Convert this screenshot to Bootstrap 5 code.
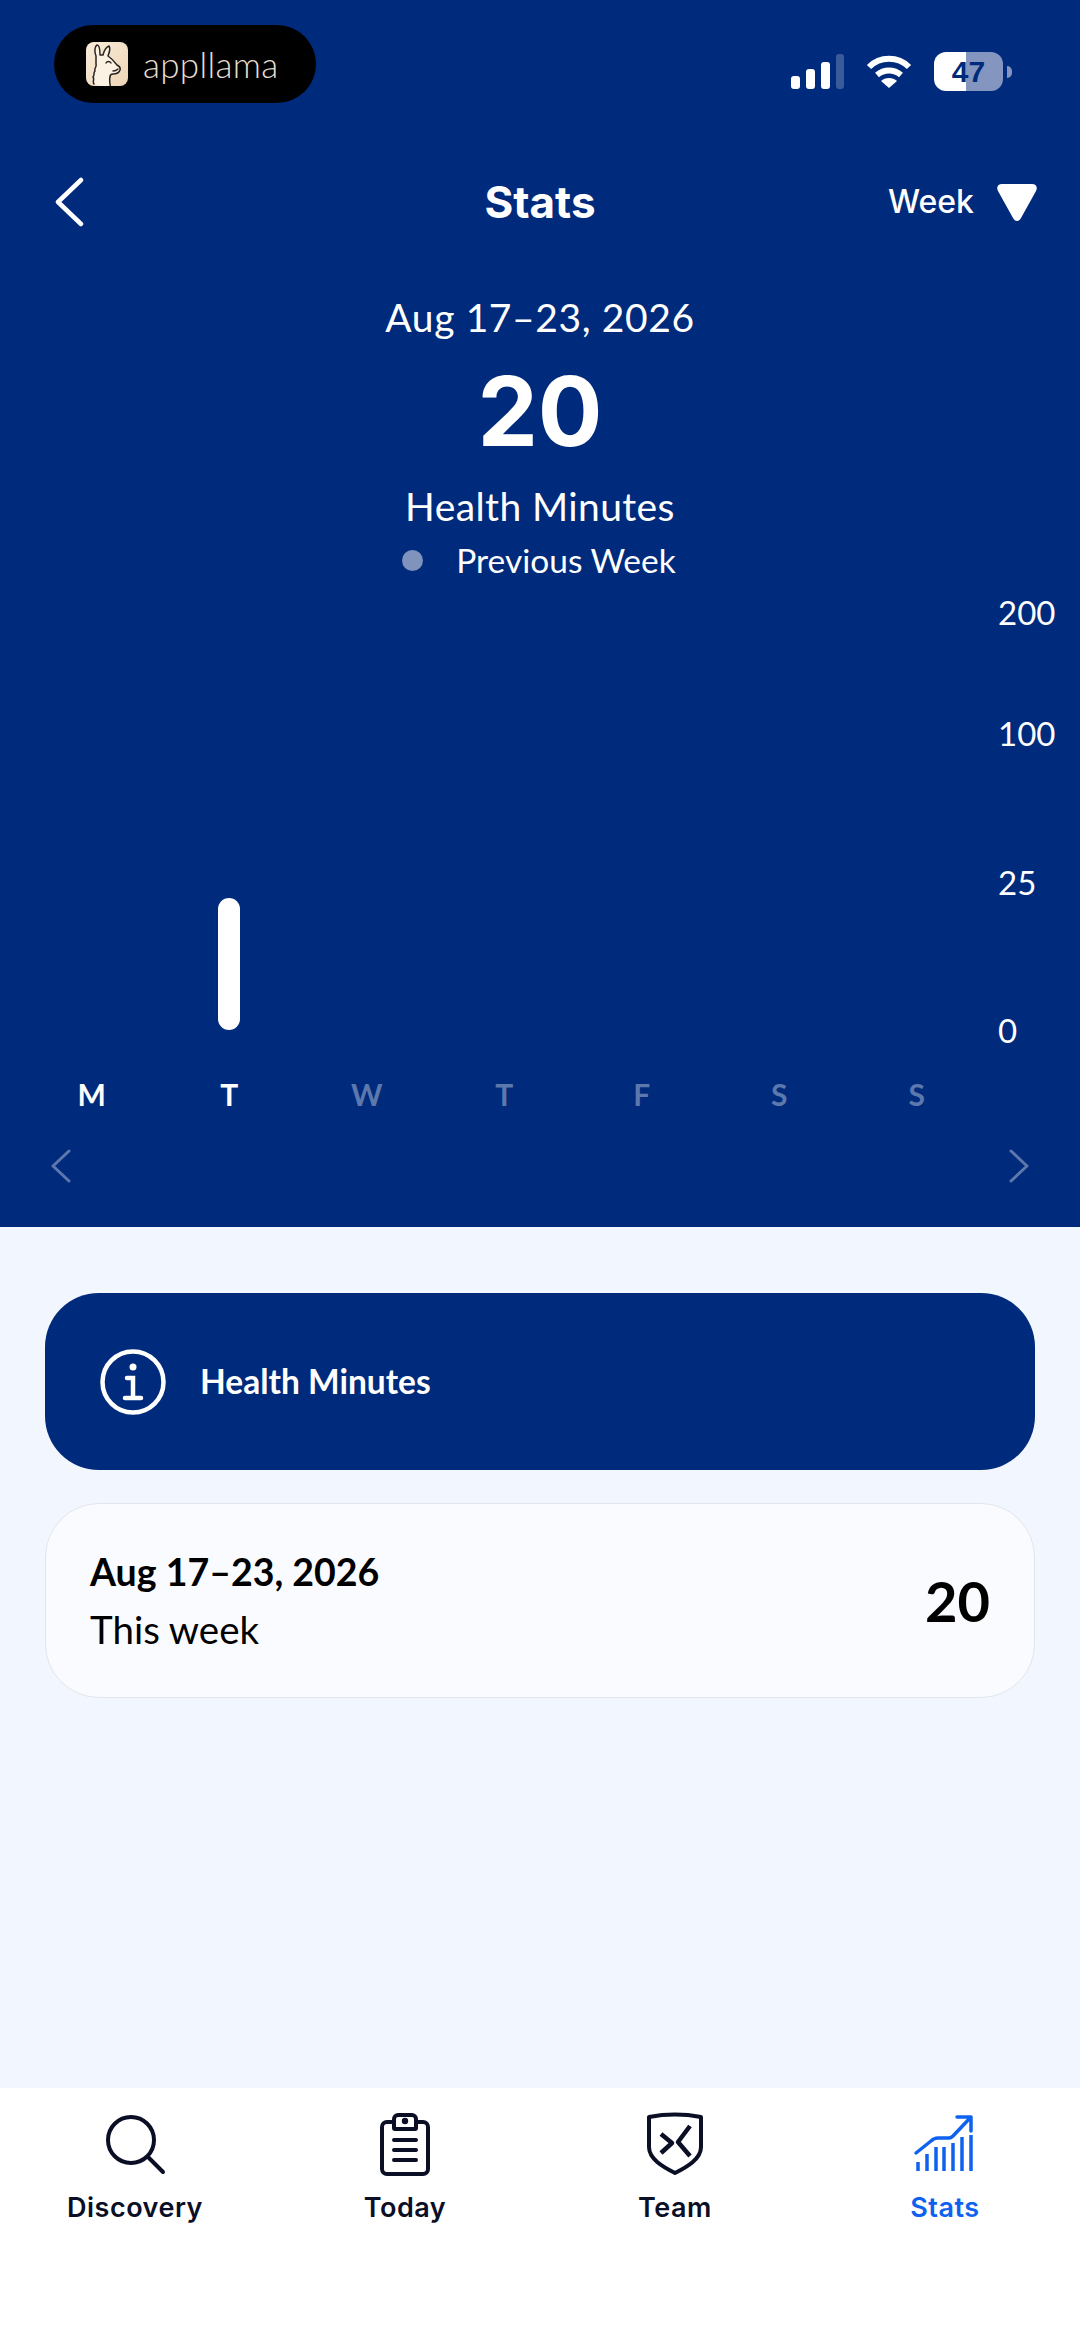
<!DOCTYPE html>
<html lang="en">
<head>
  <meta charset="UTF-8">
  <meta name="viewport" content="width=device-width, initial-scale=1.0">
  <title>Stats</title>
  <link href="https://cdn.jsdelivr.net/npm/bootstrap@5.3.3/dist/css/bootstrap.min.css" rel="stylesheet">
  <style>
    body { width: 1080px; height: 2337px; background: #f2f6fe; font-family: Lato, "Liberation Sans", sans-serif; color: #000; overflow: hidden; }
    .hero { height: 1227px; background: #002a7b; color: #fff; flex: none; }
    .status-row { height: 78px; margin-top: 25px; padding: 0 68px 0 54px; }
    .brand-pill { width: 262px; height: 78px; background: #000; border-radius: 39px; padding-left: 32px; gap: 15px; color: #e6ddd0; font-size: 35px; font-weight: 300; letter-spacing: .3px; }
    .brand-pill svg { width: 42px; height: 44px; }
    .status-icons { gap: 22px; margin-top: 27px; }
    .battery { width: 69px; height: 39px; border-radius: 12px; background: linear-gradient(90deg, #fff 47%, #8496c0 47%); color: #002a7b; font: 700 30px/39px "Liberation Sans", sans-serif; text-align: center; }
    .battery-tip { width: 5px; height: 12px; background: #8496c0; border-radius: 0 6px 6px 0; margin-left: -19px; }
    .top-nav { margin-top: 74px; height: 50px; padding: 0 43px 0 54px; position: relative; }
    .top-title { position: absolute; left: 0; right: 0; text-align: center; font: 700 44px/50px Inter, sans-serif; }
    .week-label { font: 500 32px/50px Inter, sans-serif; margin-right: 23px; }
    .date-line { margin-top: 67px; font-size: 39px; line-height: 46px; letter-spacing: .6px; }
    .big-num { font-size: 96px; font-weight: 700; line-height: 120px; margin-top: 11px; font-family: Inter, sans-serif; }
    .metric-name { font-size: 39px; line-height: 46px; margin-top: 12px; letter-spacing: .4px; }
    .legend-line { font-size: 33.5px; line-height: 40px; margin-top: 11px; gap: 33px; padding-right: 2px; }
    .legend-dot { width: 21px; height: 21px; border-radius: 50%; background: #7f93bd; }
    .chart-area { height: 500px; margin-top: 12px; padding-left: 23px; }
    .bars { width: 962px; height: 438px; }
    .bar-slot { width: 137.5px; height: 438px; }
    .day-bar { width: 22px; height: 132px; background: #fff; border-radius: 11px; }
    .y-axis { margin-left: 13px; display: grid; grid-template-rows: 121px 149px 148px 40px; font-size: 33px; line-height: 40px; }
    .days { padding-left: 23px; margin-top: -17px; width: 986px; }
    .days span { width: 137.5px; text-align: center; font-size: 30px; line-height: 38px; font-weight: 700; color: #5d78ad; }
    .days span.on { color: #fff; }
    .pager { padding: 0 50px; margin-top: 36px; }
    .pager svg { width: 22px; height: 34px; }
    .info-card { margin: 66px 45px 0; height: 177px; background: #002a7b; border-radius: 54px; padding-left: 55px; gap: 34px; color: #fff; font-size: 33.5px; font-weight: 700; }
    .info-card svg { width: 66px; height: 66px; }
    .week-card { margin: 33px 45px 0; height: 195px; background: #f9fbff; border: 1px solid #e2e5ec; border-radius: 54px; padding: 0 44px; }
    .week-date { font-size: 37.5px; font-weight: 700; line-height: 46px; }
    .week-sub { font-size: 38.5px; line-height: 46px; margin-top: 11px; }
    .week-val { font-size: 56px; font-weight: 700; }
    .tabbar { height: 249px; background: #fff; flex: none; padding-top: 24px; }
    .tab-item { width: 270px; font: 600 27px/34px Inter, sans-serif; letter-spacing: .5px; color: #0b0f26; }
    .tab-item svg { width: 64px; height: 64px; margin-bottom: 15px; display: block; }
    .tab-item.active { color: #0f62ee; }
  </style>
</head>
<body class="d-flex flex-column">
  <section class="hero">
    <div class="status-row d-flex justify-content-between align-items-start">
      <div class="brand-pill d-flex align-items-center">
        <svg viewBox="0 0 42 44">
          <defs><linearGradient id="llamaBg" x1="0" y1="0" x2="1" y2="1"><stop offset="0" stop-color="#f8ecda"/><stop offset="1" stop-color="#edd5b6"/></linearGradient></defs>
          <rect width="42" height="44" rx="8" fill="url(#llamaBg)"/>
          <path d="M8 42c-2-3 1-4-1-7 2-2 0-4 2-6-1-3 2-4 1-7 0-3 0-5 0-8-2-5-1-10 1-11 3 0 3 6 3 10 1 0 2 0 3 0 1-4 3-8 6-9 2 3 0 7-1 10 3 2 6 5 9 9 2 1 4 2 3 5-1 3-4 4-7 4-2 0-3 1-3 3-1 4 0 8 1 12" fill="#fbf2e4" stroke="#2a2420" stroke-width="1.5" stroke-linejoin="round" stroke-linecap="round"/>
          <path d="M20 21c1-2 4-2 5 0M27 29c2 0 4-1 5-2" fill="none" stroke="#2a2420" stroke-width="1.4" stroke-linecap="round"/>
        </svg>
        <span>appllama</span>
      </div>
      <div class="status-icons d-flex align-items-center">
        <svg width="53" height="36" viewBox="0 0 53 36">
          <rect x="0" y="22" width="9" height="13" rx="3" fill="#fff"/>
          <rect x="15" y="15" width="9" height="20" rx="3" fill="#fff"/>
          <rect x="30" y="8" width="9" height="27" rx="3" fill="#fff"/>
          <rect x="45" y="0" width="8" height="35" rx="3" fill="#3b5a99"/>
        </svg>
        <svg width="46" height="34" viewBox="0 0 46 34" fill="none" stroke="#fff" stroke-width="6">
          <path d="M3 12C14 1 32 1 43 12"/>
          <path d="M11 20c7-6 17-6 24 0"/>
          <path d="M23 33l-8-7c4-4 12-4 16 0z" fill="#fff" stroke="none"/>
        </svg>
        <div class="d-flex align-items-center">
          <div class="battery">47</div>
          <div class="battery-tip ms-1"></div>
        </div>
      </div>
    </div>

    <div class="top-nav d-flex justify-content-between align-items-center">
      <div class="top-title">Stats</div>
      <svg width="30" height="50" viewBox="0 0 30 50" fill="none" stroke="#fff" stroke-width="4.5" stroke-linecap="round" stroke-linejoin="round"><path d="M27 3L4 25l23 22"/></svg>
      <div class="d-flex align-items-center">
        <span class="week-label">Week</span>
        <svg width="40" height="37" viewBox="0 0 40 37" fill="#fff"><path d="M5 0h30c4 0 6 3 4 7L24 34c-2 4-6 4-8 0L1 7C-1 3 1 0 5 0z"/></svg>
      </div>
    </div>

    <div class="text-center date-line">Aug 17&#8211;23, 2026</div>
    <div class="text-center big-num">20</div>
    <div class="text-center metric-name">Health Minutes</div>
    <div class="legend-line d-flex justify-content-center align-items-center">
      <span class="legend-dot"></span>
      <span>Previous Week</span>
    </div>

    <div class="chart-area d-flex">
      <div class="bars d-flex align-items-end">
        <div class="bar-slot"></div>
        <div class="bar-slot d-flex justify-content-center align-items-end"><div class="day-bar"></div></div>
      </div>
      <div class="y-axis">
        <span>200</span><span>100</span><span>25</span><span>0</span>
      </div>
    </div>
    <div class="days d-flex">
      <span class="on">M</span><span class="on">T</span><span>W</span><span>T</span><span>F</span><span>S</span><span>S</span>
    </div>
    <div class="pager d-flex justify-content-between">
      <svg viewBox="0 0 22 34" fill="none" stroke="#5d78ad" stroke-width="3" stroke-linecap="round" stroke-linejoin="round"><path d="M19 2L3 17l16 15"/></svg>
      <svg viewBox="0 0 22 34" fill="none" stroke="#5d78ad" stroke-width="3" stroke-linecap="round" stroke-linejoin="round"><path d="M3 2l16 15L3 32"/></svg>
    </div>
  </section>

  <main class="flex-grow-1">
    <div class="info-card d-flex align-items-center">
      <svg viewBox="0 0 66 66" fill="none" stroke="#fff" stroke-width="4.5" stroke-linecap="round">
        <circle cx="33" cy="33" r="30.5"/>
        <circle cx="33" cy="18" r="3.5" fill="#fff" stroke="none"/>
        <path d="M27 29h6v20M25 49h16"/>
      </svg>
      <span>Health Minutes</span>
    </div>
    <div class="week-card d-flex justify-content-between align-items-center">
      <div>
        <div class="week-date">Aug 17&#8211;23, 2026</div>
        <div class="week-sub">This week</div>
      </div>
      <div class="week-val">20</div>
    </div>
  </main>

  <nav class="tabbar d-flex">
    <div class="tab-item d-flex flex-column align-items-center">
      <svg viewBox="0 0 64 64" fill="none" stroke="#0b0f26" stroke-width="4" stroke-linecap="round"><circle cx="28" cy="28" r="23"/><path d="M45 45l15 15"/></svg>
      <span>Discovery</span>
    </div>
    <div class="tab-item d-flex flex-column align-items-center">
      <svg viewBox="0 0 64 64" fill="none" stroke="#0b0f26" stroke-width="4" stroke-linejoin="round" stroke-linecap="round">
        <rect x="9" y="10" width="46" height="52" rx="5"/>
        <path d="M21 16V7c0-2 2-4 4-4h14c2 0 4 2 4 4v9c0 1-1 1-1 1H22c-1 0-1 0-1-1z" fill="#fff"/>
        <path d="M21 28h22M21 38h22M21 48h22"/>
        <circle cx="32" cy="9" r="1.2" fill="#0b0f26"/>
      </svg>
      <span>Today</span>
    </div>
    <div class="tab-item d-flex flex-column align-items-center">
      <svg viewBox="0 0 64 64" fill="none" stroke="#0b0f26" stroke-width="4" stroke-linejoin="round">
        <path d="M6 5c16-3 36-3 52 0v30c0 12-14 20-26 26C20 55 6 47 6 35z"/>
        <path d="M18 22l11 9-11 10" stroke-width="4.5"/>
        <path d="M47 14L35 30l12 14" stroke-width="4.5"/>
      </svg>
      <span>Team</span>
    </div>
    <div class="tab-item active d-flex flex-column align-items-center">
      <svg viewBox="0 0 64 64" fill="none" stroke="#0f62ee" stroke-width="3.5" stroke-linecap="round" stroke-linejoin="round">
        <path d="M3 41l15-12c2-2 4-3 7-3h11c2 0 3-1 4-2L58 5M44 5h14v14"/>
        <path d="M5 50v9M14 42v17M23 35v24M31 35v24M40 31v28M49 25v34M58 23v36" stroke-linecap="butt"/>
      </svg>
      <span>Stats</span>
    </div>
  </nav>
  <script src="https://cdn.jsdelivr.net/npm/bootstrap@5.3.3/dist/js/bootstrap.bundle.min.js"></script>
</body>
</html>
